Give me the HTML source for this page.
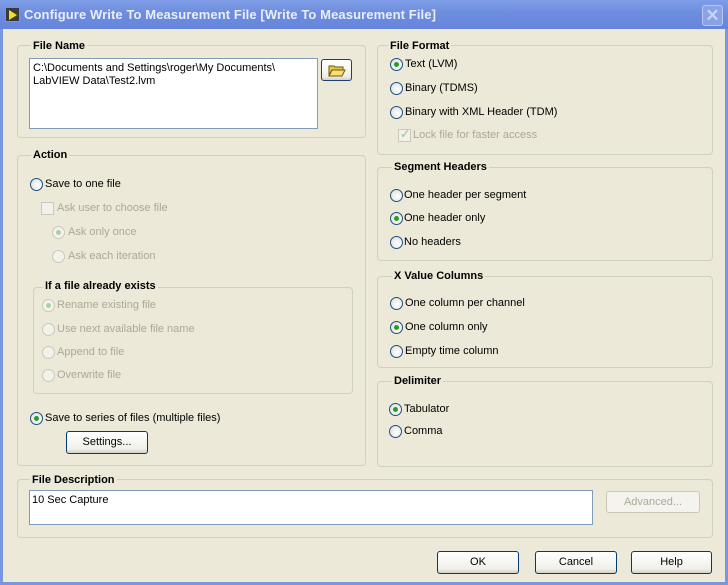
<!DOCTYPE html>
<html><head><meta charset="utf-8"><style>
*{box-sizing:border-box;margin:0;padding:0}
body{width:728px;height:585px;overflow:hidden;background:#ece9d8;font-family:"Liberation Sans",sans-serif;font-size:11px;color:#000;position:relative}
.a{position:absolute;white-space:nowrap}
#title{left:0;top:0;width:728px;height:29px;background:linear-gradient(#7f9ee6,#6f8ee0 40%,#6585dc);}
#title span{position:absolute;left:24px;top:7px;color:#e8eefc;font-weight:bold;font-size:13px;letter-spacing:0.1px}
.frame{border:1px solid #7e97dc}
.g{position:absolute;border:1px solid #d0d0bf;border-radius:4px}
.gl{position:absolute;background:#ece9d8;font-weight:bold;padding:0 2px;line-height:12px}
.r{position:absolute;width:13px;height:13px;border-radius:50%;border:1px solid #1c5180;background:radial-gradient(circle at 60% 60%,#fff,#dcdad2)}
.r.on::after{content:"";position:absolute;left:3px;top:3px;width:5px;height:5px;border-radius:50%;background:#21a121}
.r.dis{border-color:#cac8bb;background:#f3f2ea}
.r.dis.on::after{background:#a9d1a6}
.t{position:absolute;line-height:13px}
.dt{color:#aca899}
.cb{position:absolute;width:13px;height:13px;border:1px solid #cac8bb;background:#f3f2ea}
.box{position:absolute;background:#fff;border:1px solid #7f9db9}
.btn{position:absolute;border:1px solid #003c74;border-radius:3px;background:linear-gradient(#fff,#f0f0ea 80%,#d6d0c5);text-align:center;line-height:20px}
</style></head><body>
<div class="a" id="title"><span>Configure Write To Measurement File [Write To Measurement File]</span>
<div class="a" style="left:5px;top:7px;width:15px;height:15px;background:#3a3a3a;border:1px solid #c89020"><div class="a" style="left:3px;top:2px;width:0;height:0;border-left:8px solid #f0e020;border-top:5px solid transparent;border-bottom:5px solid transparent"></div></div>
<div class="a" style="left:702px;top:5px;width:21px;height:21px;border:1px solid #b9c6ef;border-radius:3px;background:#8aa2e6;color:#c8d4f4;font-size:17px;text-align:center;line-height:19px;font-weight:bold">✕</div>
</div>
<div class="a" style="left:0;top:29px;width:3px;height:556px;background:#7a96df"></div>
<div class="a" style="left:725px;top:29px;width:3px;height:556px;background:#7a96df"></div>
<div class="a" style="left:0;top:582px;width:728px;height:3px;background:#7a96df"></div>

<!-- File Name -->
<div class="g" style="left:17px;top:45px;width:349px;height:93px"></div>
<div class="gl" style="left:31px;top:40px">File Name</div>
<div class="box" style="left:29px;top:58px;width:289px;height:71px"><div class="t" style="left:3px;top:3px">C:\Documents and Settings\roger\My Documents\<br>LabVIEW Data\Test2.lvm</div></div>
<div class="btn" style="left:321px;top:59px;width:31px;height:22px;border-color:#1c3f6e"><svg width="20" height="16" viewBox="0 0 20 16" style="margin-top:2px"><path d="M2 4h5l1 1h8v3H5L2 13z" fill="#e8c840" stroke="#6a5a10"/><path d="M5 8h13l-3 6H2z" fill="#f8e070" stroke="#6a5a10"/></svg></div>

<!-- Action -->
<div class="g" style="left:17px;top:155px;width:349px;height:311px"></div>
<div class="gl" style="left:31px;top:149px">Action</div>
<div class="r" style="left:30px;top:178px"></div><div class="t" style="left:45px;top:178px">Save to one file</div>
<div class="cb" style="left:41px;top:202px"></div><div class="t dt" style="left:57px;top:202px">Ask user to choose file</div>
<div class="r dis on" style="left:52px;top:226px"></div><div class="t dt" style="left:68px;top:226px">Ask only once</div>
<div class="r dis" style="left:52px;top:250px"></div><div class="t dt" style="left:68px;top:250px">Ask each iteration</div>
<div class="g" style="left:33px;top:287px;width:320px;height:107px"></div>
<div class="gl" style="left:43px;top:280px">If a file already exists</div>
<div class="r dis on" style="left:42px;top:299px"></div><div class="t dt" style="left:57px;top:299px">Rename existing file</div>
<div class="r dis" style="left:42px;top:323px"></div><div class="t dt" style="left:57px;top:323px">Use next available file name</div>
<div class="r dis" style="left:42px;top:346px"></div><div class="t dt" style="left:57px;top:346px">Append to file</div>
<div class="r dis" style="left:42px;top:369px"></div><div class="t dt" style="left:57px;top:369px">Overwrite file</div>
<div class="r on" style="left:30px;top:412px"></div><div class="t" style="left:45px;top:412px">Save to series of files (multiple files)</div>
<div class="btn" style="left:66px;top:431px;width:82px;height:23px">Settings...</div>

<!-- File Format -->
<div class="g" style="left:377px;top:45px;width:336px;height:110px"></div>
<div class="gl" style="left:388px;top:40px">File Format</div>
<div class="r on" style="left:390px;top:58px"></div><div class="t" style="left:405px;top:58px">Text (LVM)</div>
<div class="r" style="left:390px;top:82px"></div><div class="t" style="left:405px;top:82px">Binary (TDMS)</div>
<div class="r" style="left:390px;top:106px"></div><div class="t" style="left:405px;top:106px">Binary with XML Header (TDM)</div>
<div class="cb" style="left:398px;top:129px"><div class="a" style="left:1px;top:-3px;color:#a9d1a6;font-size:12px;font-weight:bold">✓</div></div><div class="t dt" style="left:413px;top:129px">Lock file for faster access</div>

<!-- Segment Headers -->
<div class="g" style="left:377px;top:167px;width:336px;height:94px"></div>
<div class="gl" style="left:392px;top:161px">Segment Headers</div>
<div class="r" style="left:390px;top:189px"></div><div class="t" style="left:404px;top:189px">One header per segment</div>
<div class="r on" style="left:390px;top:212px"></div><div class="t" style="left:404px;top:212px">One header only</div>
<div class="r" style="left:390px;top:236px"></div><div class="t" style="left:404px;top:236px">No headers</div>

<!-- X Value -->
<div class="g" style="left:377px;top:276px;width:336px;height:92px"></div>
<div class="gl" style="left:392px;top:270px">X Value Columns</div>
<div class="r" style="left:390px;top:297px"></div><div class="t" style="left:405px;top:297px">One column per channel</div>
<div class="r on" style="left:390px;top:321px"></div><div class="t" style="left:405px;top:321px">One column only</div>
<div class="r" style="left:390px;top:345px"></div><div class="t" style="left:405px;top:345px">Empty time column</div>

<!-- Delimiter -->
<div class="g" style="left:377px;top:381px;width:336px;height:86px"></div>
<div class="gl" style="left:392px;top:375px">Delimiter</div>
<div class="r on" style="left:389px;top:403px"></div><div class="t" style="left:404px;top:403px">Tabulator</div>
<div class="r" style="left:389px;top:425px"></div><div class="t" style="left:404px;top:425px">Comma</div>

<!-- File Description -->
<div class="g" style="left:17px;top:479px;width:696px;height:59px"></div>
<div class="gl" style="left:30px;top:474px">File Description</div>
<div class="box" style="left:29px;top:490px;width:564px;height:35px"><div class="t" style="left:2px;top:3px">10 Sec Capture</div></div>
<div class="btn" style="left:606px;top:491px;width:94px;height:22px;border-color:#c9c7ba;color:#aca899;background:#f4f3ee">Advanced...</div>

<div class="btn" style="left:437px;top:551px;width:82px;height:23px">OK</div>
<div class="btn" style="left:535px;top:551px;width:82px;height:23px">Cancel</div>
<div class="btn" style="left:631px;top:551px;width:81px;height:23px">Help</div>
</body></html>
